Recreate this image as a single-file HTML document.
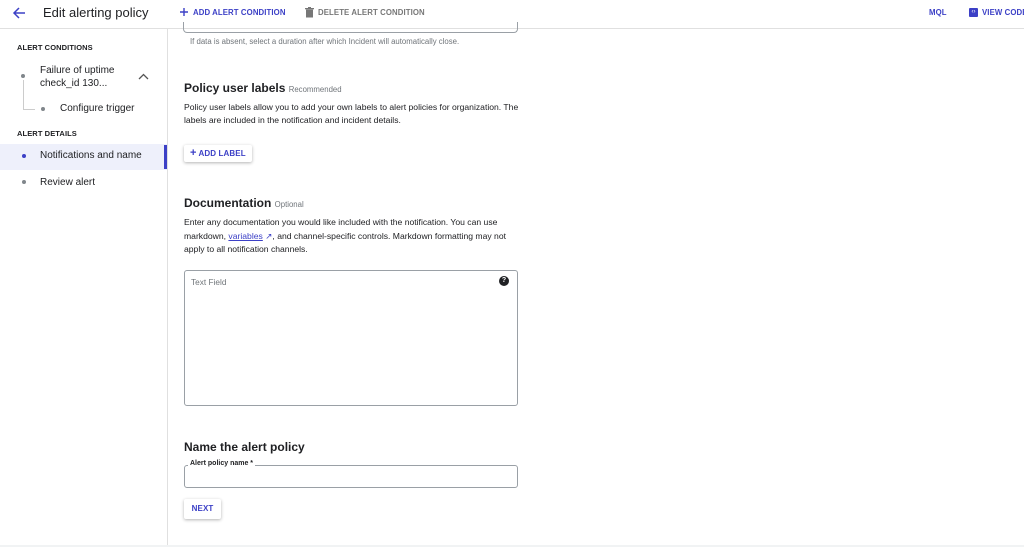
<!DOCTYPE html>
<html><head><style>
*{box-sizing:border-box;margin:0;padding:0}
body{width:1024px;height:547px;overflow:hidden;background:#fff;font-family:"Liberation Sans",sans-serif;color:#202124;position:relative}
.a{position:absolute;white-space:nowrap}
.blue{color:#3c40c6}
.cap{font-size:8px;font-weight:bold;letter-spacing:.1px}
.p{font-size:8.5px;line-height:14px;color:#202124}
.dot{position:absolute;width:4px;height:4px;border-radius:50%;background:#80868b}
</style></head><body>
<div class="a" style="left:0;top:28px;width:1024px;height:1px;background:#e0e0e0"></div>
<div class="a" style="left:167px;top:29px;width:1px;height:518px;background:#e0e0e0"></div>
<div class="a" style="left:0;top:545px;width:1024px;height:2px;background:#f1f3f4"></div>
<svg class="a" style="left:12px;top:6px" width="14" height="14" viewBox="0 0 14 14"><path d="M13 7H2M7 2L2 7l5 5" stroke="#3c40c6" stroke-width="1.5" fill="none"/></svg>
<div class="a" style="left:43px;top:5px;font-size:13px">Edit alerting policy</div>
<svg class="a" style="left:180px;top:8px" width="8" height="8" viewBox="0 0 8 8"><path d="M4 0v8M0 4h8" stroke="#3c40c6" stroke-width="1.4"/></svg>
<div class="a blue cap" style="left:193px;top:8px;font-size:7.8px">ADD ALERT CONDITION</div>
<svg class="a" style="left:305px;top:7px" width="9" height="11" viewBox="0 0 9 11"><rect x="1" y="2.5" width="7" height="8" fill="#777"/><rect x="0" y="1" width="9" height="1.3" fill="#777"/><rect x="3" y="0" width="3" height="1.2" fill="#777"/></svg>
<div class="a cap" style="left:318px;top:8px;font-size:7.8px;color:#777">DELETE ALERT CONDITION</div>
<div class="a blue cap" style="left:929px;top:8px;font-size:7.8px">MQL</div>
<div class="a" style="left:969px;top:8px;width:9px;height:9px;background:#3c40c6;border-radius:1px;color:#fff;font-size:6px;text-align:center;line-height:9px">‹›</div>
<div class="a blue cap" style="left:982px;top:8px;font-size:7.8px">VIEW CODE</div>
<!-- sidebar -->
<div class="a cap" style="left:17px;top:43px;font-size:7.5px">ALERT CONDITIONS</div>
<div class="dot" style="left:21px;top:74px"></div>
<div class="a" style="left:23px;top:80px;width:1px;height:30px;background:#ccc"></div>
<div class="a" style="left:23px;top:109px;width:12px;height:1px;background:#ccc"></div>
<div class="a" style="left:40px;top:64px;font-size:10px;line-height:13px">Failure of uptime<br>check_id 130...</div>
<svg class="a" style="left:138px;top:73px" width="11" height="7" viewBox="0 0 11 7"><path d="M1 6l4.5-4.5L10 6" stroke="#555" stroke-width="1.3" fill="none"/></svg>
<div class="dot" style="left:41px;top:107px"></div>
<div class="a" style="left:60px;top:103px;font-size:10px">Configure trigger</div>
<div class="a cap" style="left:17px;top:129px;font-size:7.5px">ALERT DETAILS</div>
<div class="a" style="left:0;top:144px;width:167px;height:26px;background:#eef0fb"></div>
<div class="a" style="left:164px;top:145px;width:3px;height:24px;background:#3c40c6"></div>
<div class="dot" style="left:22px;top:154px;background:#3c40c6"></div>
<div class="a" style="left:40px;top:150px;font-size:10px">Notifications and name</div>
<div class="dot" style="left:22px;top:180px"></div>
<div class="a" style="left:40px;top:177px;font-size:10px">Review alert</div>
<!-- main -->
<div class="a" style="left:183px;top:22px;width:335px;height:11px;border:1px solid #9aa0a6;border-top:none;border-radius:0 0 4px 4px"></div>
<div class="a" style="left:190px;top:37px;font-size:7.8px;color:#70757a">If data is absent, select a duration after which Incident will automatically close.</div>
<div class="a" style="left:184px;top:81px;font-size:12px;font-weight:bold">Policy user labels <span style="font-size:7.8px;font-weight:normal;color:#70757a">Recommended</span></div>
<div class="a p" style="left:184px;top:101px;white-space:normal;width:340px;font-size:8.6px;line-height:13px">Policy user labels allow you to add your own labels to alert policies for organization. The labels are included in the notification and incident details.</div>
<div class="a blue cap" style="left:184px;top:145px;height:17px;width:68px;box-shadow:0 1px 3px rgba(0,0,0,.3);border-radius:2px;line-height:17px;padding-left:6px"><span style="font-size:11px">+</span> ADD LABEL</div>
<div class="a" style="left:184px;top:196px;font-size:12px;font-weight:bold">Documentation <span style="font-size:7.8px;font-weight:normal;color:#70757a">Optional</span></div>
<div class="a p" style="left:184px;top:216px;white-space:normal;width:336px;font-size:8.6px;line-height:13.5px">Enter any documentation you would like included with the notification. You can use markdown, <span style="color:#3c40c6;text-decoration:underline">variables</span> <span style="color:#3c40c6">↗</span>, and channel-specific controls. Markdown formatting may not apply to all notification channels.</div>
<div class="a" style="left:184px;top:270px;width:334px;height:136px;border:1px solid #9aa0a6;border-radius:3px"></div>
<div class="a" style="left:191px;top:277px;font-size:8.3px;color:#70757a">Text Field</div>
<div class="a" style="left:499px;top:276px;width:10px;height:10px;border-radius:50%;background:#202124;color:#fff;font-size:7px;font-weight:bold;text-align:center;line-height:10px">?</div>
<div class="a" style="left:184px;top:440px;font-size:12px;font-weight:bold">Name the alert policy</div>
<div class="a" style="left:184px;top:465px;width:334px;height:23px;border:1px solid #9aa0a6;border-radius:3px"></div>
<div class="a" style="left:188px;top:460px;background:#fff;padding:0 2px;font-size:7px;font-weight:bold">Alert policy name *</div>
<div class="a blue cap" style="left:184px;top:499px;width:37px;height:20px;box-shadow:0 1px 3px rgba(0,0,0,.3);border-radius:2px;text-align:center;line-height:20px">NEXT</div>
</body></html>
